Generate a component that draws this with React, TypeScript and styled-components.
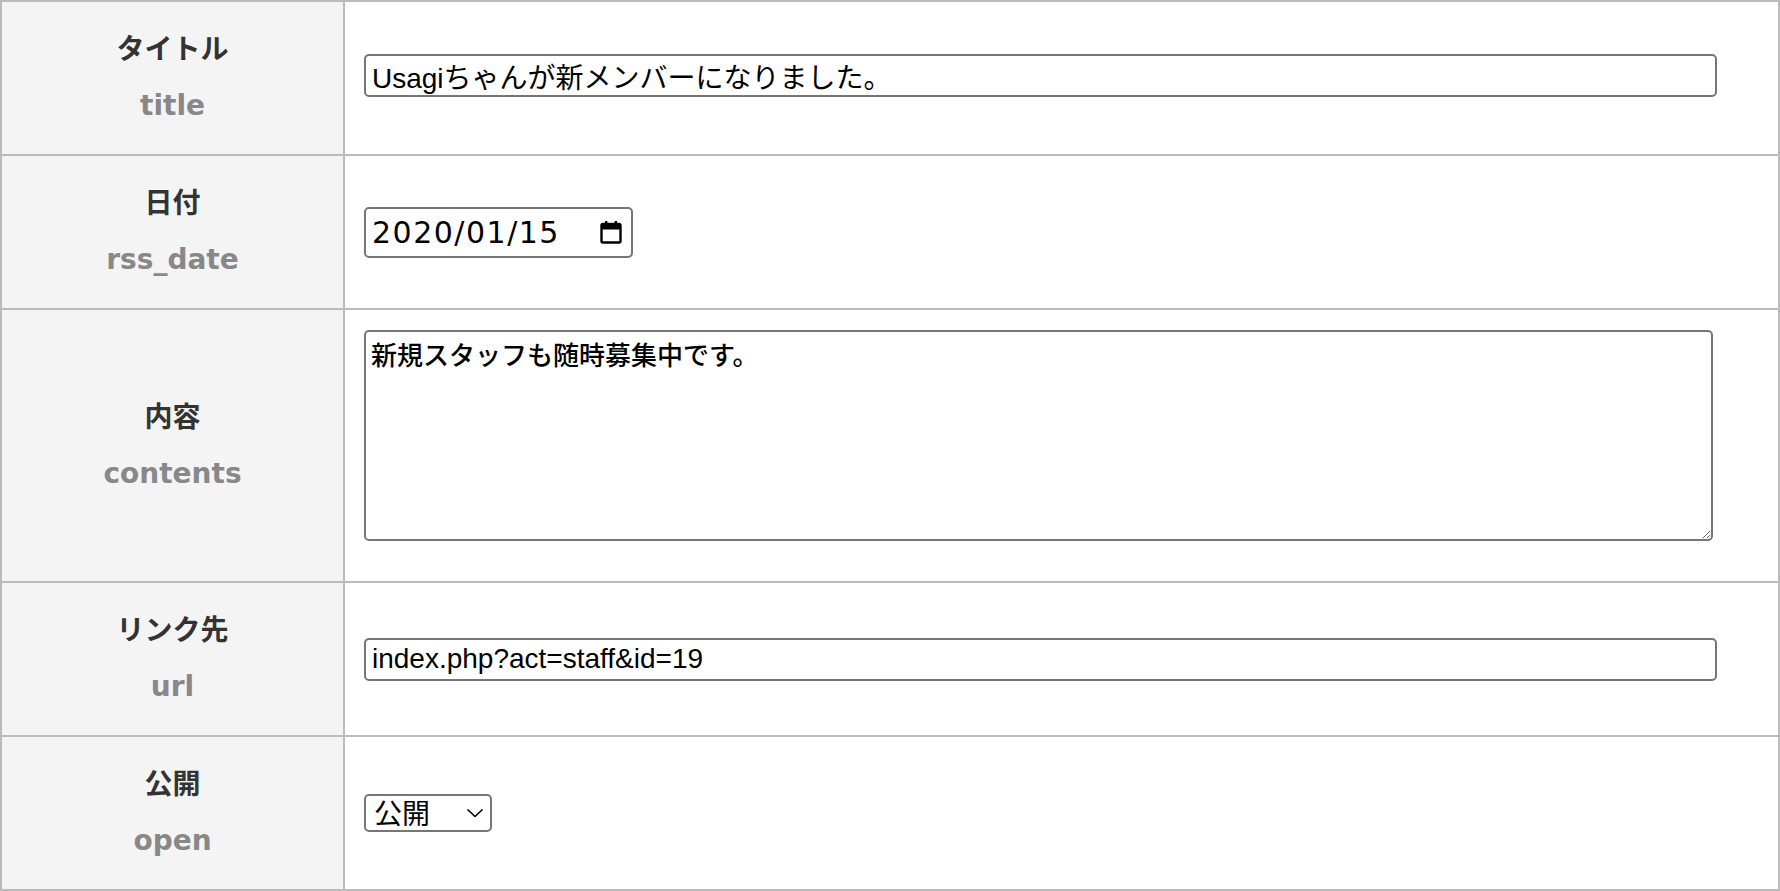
import React from 'react';
import styled, { createGlobalStyle } from 'styled-components';

const GlobalStyle = createGlobalStyle`
  body {
    margin: 0;
    background: #ffffff;
    font-family: "Liberation Sans", "Noto Sans CJK JP", sans-serif;
  }
`;

const FormTable = styled.table`
  width: 1780px;
  border-collapse: collapse;
  border: 2px solid #bbbbbb;
`;

const Row = styled.tr<{ $h: number }>`
  height: ${(p) => p.$h}px;
`;

const HeadCell = styled.th`
  box-sizing: border-box;
  width: 343px;
  padding: 0 20px;
  background: #f4f4f4;
  border: 2px solid #bbbbbb;
  text-align: center;
  vertical-align: middle;
  font-family: "DejaVu Sans", "Noto Sans CJK JP", sans-serif;
  font-size: 28px;
  font-weight: bold;
  line-height: 56px;
`;

const Label = styled.span`
  display: block;
  color: #333333;
`;

const Key = styled.span`
  display: block;
  color: #888888;
`;

const DataCell = styled.td`
  padding: 0 19px;
  border: 2px solid #bbbbbb;
  vertical-align: middle;
`;

const TextField = styled.input<{ $lift?: number }>`
  display: block;
  box-sizing: border-box;
  width: 97%;
  height: 43px;
  margin: 0 0 ${(p) => p.$lift ?? 0}px;
  padding: 0 6px;
  border: 2px solid #767676;
  border-radius: 5px;
  background: #ffffff;
  color: #000000;
  font-family: "Liberation Sans", "Noto Sans CJK JP", sans-serif;
  font-size: 28px;
`;

const DateBox = styled.label`
  display: flex;
  align-items: center;
  justify-content: space-between;
  box-sizing: border-box;
  width: 269px;
  height: 51px;
  padding: 0 9px 0 6px;
  border: 2px solid #767676;
  border-radius: 5px;
  background: #ffffff;
`;

const DateText = styled.input`
  width: 215px;
  padding: 0;
  border: none;
  outline: none;
  background: transparent;
  color: #000000;
  font-family: "DejaVu Sans", sans-serif;
  font-size: 30px;
  letter-spacing: 1.5px;
`;

const MemoArea = styled.textarea`
  display: block;
  box-sizing: border-box;
  width: 96.7%;
  height: 211px;
  margin: 0 0 20px;
  padding: 6px 5px;
  border: 2px solid #767676;
  border-radius: 5px;
  color: #000000;
  font-family: "Noto Sans CJK JP", sans-serif;
  font-size: 26px;
  font-weight: 500;
  line-height: 1.25;
`;

const SelectWrap = styled.div`
  position: relative;
  width: 128px;
`;

const Picker = styled.select`
  appearance: none;
  display: block;
  box-sizing: border-box;
  width: 128px;
  height: 38px;
  margin: 0;
  padding: 0 0 4px 8px;
  border: 2px solid #767676;
  border-radius: 5px;
  background: #ffffff;
  color: #000000;
  font-family: "Noto Sans CJK JP", sans-serif;
  font-size: 28px;
  line-height: 32px;
`;

const Chevron = styled.svg`
  position: absolute;
  right: 8px;
  top: 14px;
  pointer-events: none;
`;

const CalendarIcon = () => (
  <svg width="22" height="24" viewBox="0 0 22 24">
    <rect x="1.5" y="4" width="19" height="18.5" rx="1.5" fill="none" stroke="#000" strokeWidth="2.4" />
    <rect x="1.5" y="4" width="19" height="5.5" fill="#000" />
    <rect x="5" y="1" width="2.4" height="4" fill="#000" />
    <rect x="14.6" y="1" width="2.4" height="4" fill="#000" />
  </svg>
);

const fields = [
  { label: 'タイトル', key: 'title', h: 154 },
  { label: '日付', key: 'rss_date', h: 154 },
  { label: '内容', key: 'contents', h: 273 },
  { label: 'リンク先', key: 'url', h: 154 },
  { label: '公開', key: 'open', h: 154 },
];

const App = () => {
  const renderField = (key: string) => {
    switch (key) {
      case 'title':
        return <TextField type="text" $lift={5} defaultValue="Usagiちゃんが新メンバーになりました。" />;
      case 'rss_date':
        return (
          <DateBox>
            <DateText type="text" defaultValue="2020/01/15" />
            <CalendarIcon />
          </DateBox>
        );
      case 'contents':
        return <MemoArea defaultValue="新規スタッフも随時募集中です。" />;
      case 'url':
        return <TextField type="text" defaultValue="index.php?act=staff&id=19" />;
      default:
        return (
          <SelectWrap>
            <Picker defaultValue="1">
              <option value="1">公開</option>
              <option value="0">非公開</option>
            </Picker>
            <Chevron width="18" height="10" viewBox="0 0 18 10">
              <path d="M1.5 1.5l7.5 7 7.5-7" fill="none" stroke="#000" strokeWidth="1.6" />
            </Chevron>
          </SelectWrap>
        );
    }
  };

  return (
    <>
      <GlobalStyle />
      <form>
        <FormTable>
          <tbody>
            {fields.map((f) => (
              <Row key={f.key} $h={f.h}>
                <HeadCell>
                  <Label>{f.label}</Label>
                  <Key>{f.key}</Key>
                </HeadCell>
                <DataCell>{renderField(f.key)}</DataCell>
              </Row>
            ))}
          </tbody>
        </FormTable>
      </form>
    </>
  );
};

export default App;
